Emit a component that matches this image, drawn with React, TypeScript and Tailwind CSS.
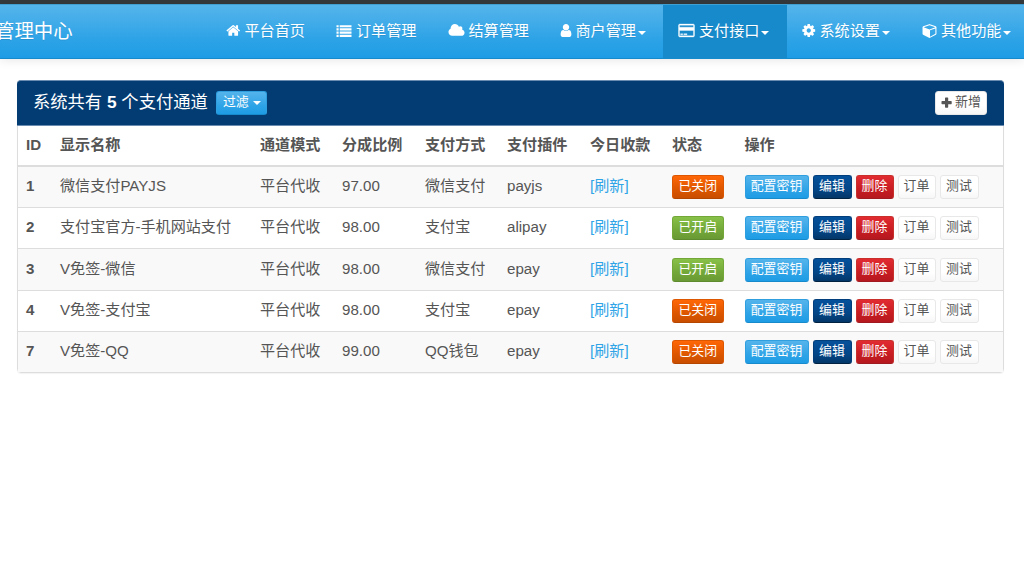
import type { ReactNode } from "react";
import clsx from "clsx";

interface NavItem {
  label: string;
  icon: ReactNode;
  width: string;
  hasMenu?: boolean;
  active?: boolean;
}

interface Channel {
  id: number;
  name: string;
  mode: string;
  rate: string;
  type: string;
  plugin: string;
  enabled: boolean;
  height: string;
}

const icon = (path: string, width = 1792, className = "w-[15px]") => (
  <svg viewBox={`0 0 ${width} 1792`} className={clsx("mb-px h-[15px] shrink-0 fill-current", className)}>
    <path fillRule="evenodd" d={path} />
  </svg>
);

const HomeIcon = icon(
  "M1408 992v480q0 26-19 45t-45 19h-384v-384h-256v384h-384q-26 0-45-19t-19-45v-480q0-1 .5-3t.5-3l575-474 575 474q1 2 1 6zm223-69l-62 74q-8 9-21 11h-3q-13 0-21-7l-692-577-692 577q-12 8-24 7-13-2-21-11l-62-74q-8-10-7-23.5t11-21.5l719-599q32-26 76-26t76 26l244 204v-195q0-14 9-23t23-9h192q14 0 23 9t9 23v408l219 182q10 8 11 21.5t-7 23.5z",
  1664,
  "w-[14.5px]"
);
const ListIcon = icon(
  "M0 256h256v256h-256zM0 640h256v256h-256zM0 1024h256v256h-256zM0 1408h256v256h-256zM384 256h1408v256h-1408zM384 640h1408v256h-1408zM384 1024h1408v256h-1408zM384 1408h1408v256h-1408z",
  1792,
  "w-[16px]"
);
const CloudIcon = icon(
  "M1920 1152q0 159-112.5 271.5t-271.5 112.5h-1088q-185 0-316.5-131.5t-131.5-316.5q0-132 71-241.5t187-163.5q-2-28-2-43 0-212 150-362t362-150q158 0 286.5 88t187.5 230q70-62 166-62 106 0 181 75t75 181q0 75-41 138 129 30 213 134.5t84 239.5z",
  1920,
  "w-[17px]"
);
const UserIcon = icon(
  "M1280 1399q0 109-62.5 187t-150.5 78h-854q-88 0-150.5-78t-62.5-187q0-85 8.5-160.5t31.5-152 58.5-131 94-89 134.5-34.5q131 128 313 128t313-128q76 0 134.5 34.5t94 89 58.5 131 31.5 152 8.5 160.5zm-256-887q0 159-112.5 271.5t-271.5 112.5-271.5-112.5-112.5-271.5 112.5-271.5 271.5-112.5 271.5 112.5 112.5 271.5z",
  1280,
  "w-[12px]"
);
const CardIcon = icon(
  "M1760 128q66 0 113 47t47 113v1216q0 66-47 113t-113 47h-1600q-66 0-113-47t-47-113v-1216q0-66 47-113t113-47h1600zM160 256q-13 0-22.5 9.5t-9.5 22.5v224h1664v-224q0-13-9.5-22.5t-22.5-9.5h-1600zM1760 1536q13 0 22.5-9.5t9.5-22.5v-608h-1664v608q0 13 9.5 22.5t22.5 9.5h1600zM256 1408v-128h256v128h-256zM640 1408v-128h384v128h-384z",
  1920,
  "w-[17px] stroke-current stroke-[40]"
);
const CogIcon = icon(
  "M1024 896q0-106-75-181t-181-75-181 75-75 181 75 181 181 75 181-75 75-181zm512-109v222q0 12-8 23t-20 13l-185 28q-19 54-39 91 35 50 107 138 10 12 10 25t-9 23q-27 37-99 108t-94 71q-12 0-26-9l-138-108q-44 23-91 38-16 136-29 186-7 28-36 28h-222q-14 0-24.5-8.5t-11.5-21.5l-28-184q-49-16-90-37l-141 107q-10 9-25 9-14 0-25-11-126-114-165-168-7-10-7-23 0-12 8-23 15-21 51-66.5t54-70.5q-27-50-41-99l-183-27q-13-2-21-12.5t-8-23.5v-222q0-12 8-23t19-13l186-28q14-46 39-92-40-57-107-138-10-12-10-24 0-10 9-23 26-36 98.5-107.5t94.5-71.5q13 0 26 10l138 107q44-23 91-38 16-136 29-186 7-28 36-28h222q14 0 24.5 8.5t11.5 21.5l28 184q49 16 90 37l142-107q9-9 24-9 13 0 25 10 129 119 165 170 7 8 7 22 0 12-8 23-15 21-51 66.5t-54 70.5q26 50 41 98l183 28q13 2 21 12.5t8 23.5z",
  1536,
  "w-[13.5px]"
);
const CubeIcon = icon(
  "M896 1629l640-349v-636l-640 233v752zm-64-865l698-254-698-254-698 254 698 254zm832-252v768q0 35-18 65t-49 47l-704 384q-28 16-61 16t-61-16l-704-384q-31-17-49-47t-18-65v-768q0-40 23-73t61-47l704-256q22-8 44-8t44 8l704 256q38 14 61 47t23 73z",
  1664,
  "w-[15px]"
);
const PlusIcon = (
  <svg viewBox="0 0 11 11" className="size-[11px] shrink-0 fill-current">
    <path d="M4.6 .5h2q.6 0 .6 .6v2.9h2.9q.6 0 .6 .6v2q0 .6-.6 .6h-2.9v2.9q0 .6-.6 .6h-2q-.6 0-.6-.6v-2.9h-2.9q-.6 0-.6-.6v-2q0-.6 .6-.6h2.9v-2.9q0-.6 .6-.6z" />
  </svg>
);

const navItems: NavItem[] = [
  { label: "平台首页", icon: HomeIcon, width: "w-[110px]" },
  { label: "订单管理", icon: ListIcon, width: "w-[111.5px]" },
  { label: "结算管理", icon: CloudIcon, width: "w-[112px]" },
  { label: "商户管理", icon: UserIcon, width: "w-[118.5px]", hasMenu: true },
  { label: "支付接口", icon: CardIcon, width: "w-[124px]", hasMenu: true, active: true },
  { label: "系统设置", icon: CogIcon, width: "w-[120px]", hasMenu: true },
  { label: "其他功能", icon: CubeIcon, width: "w-[117px]", hasMenu: true },
];

const columns = [
  { label: "ID", width: "w-[34px]" },
  { label: "显示名称", width: "w-[200px]" },
  { label: "通道模式", width: "w-[82px]" },
  { label: "分成比例", width: "w-[83px]" },
  { label: "支付方式", width: "w-[82px]" },
  { label: "支付插件", width: "w-[83px]" },
  { label: "今日收款", width: "w-[82px]" },
  { label: "状态", width: "w-[72.5px]" },
  { label: "操作", width: "w-auto" },
];

const channels: Channel[] = [
  { id: 1, name: "微信支付PAYJS", mode: "平台代收", rate: "97.00", type: "微信支付", plugin: "payjs", enabled: false, height: "h-[40px]" },
  { id: 2, name: "支付宝官方-手机网站支付", mode: "平台代收", rate: "98.00", type: "支付宝", plugin: "alipay", enabled: true, height: "h-[41px]" },
  { id: 3, name: "V免签-微信", mode: "平台代收", rate: "98.00", type: "微信支付", plugin: "epay", enabled: true, height: "h-[42px]" },
  { id: 4, name: "V免签-支付宝", mode: "平台代收", rate: "98.00", type: "支付宝", plugin: "epay", enabled: false, height: "h-[41px]" },
  { id: 7, name: "V免签-QQ", mode: "平台代收", rate: "99.00", type: "QQ钱包", plugin: "epay", enabled: false, height: "h-[41px]" },
];

const variants = {
  info: "border-[#2f9fe0] border-b-[#178acc] bg-linear-to-b from-[#54b4eb] via-[#2fa4e7] via-60% to-[#1d9ce5] text-white",
  primary: "border-[#033e7c] border-b-[#022241] bg-linear-to-b from-[#04519b] via-[#044687] via-60% to-[#033769] text-white",
  danger: "border-[#c9302c] border-b-[#a01a1f] bg-linear-to-b from-[#e12b31] via-[#c71c22] via-60% to-[#b5191f] text-white",
  warning: "border-[#dd5600] border-b-[#b44600] bg-linear-to-b from-[#ff6707] via-[#dd5600] via-60% to-[#c94e00] text-white",
  success: "border-[#73a839] border-b-[#5f8b2f] bg-linear-to-b from-[#88c149] via-[#73a839] via-60% to-[#699934] text-white",
  plain: "border-[#e8e8e8] bg-linear-to-b from-white via-white via-60% to-[#f7f7f7] text-[#555]",
};

function Caret({ className }: { className?: string }) {
  return <span className={clsx("size-0 shrink-0 border-x-4 border-t-4 border-x-transparent border-t-current", className)} />;
}

function Button({ variant, width, children }: { variant: keyof typeof variants; width: string; children: ReactNode }) {
  return (
    <button
      className={clsx(
        "flex h-[24px] shrink-0 items-center justify-center rounded-[3px] border pb-px text-[12.9px] leading-none whitespace-nowrap",
        variants[variant],
        width
      )}
    >
      {children}
    </button>
  );
}

function Navbar() {
  return (
    <nav className="flex h-[55px] border-t border-b border-t-[#3f9fd2] border-b-[#178acc] bg-linear-to-b from-[#54b4eb] via-[#2fa4e7] via-60% to-[#1d9ce5] text-white shadow-[0_1px_10px_rgba(0,0,0,0.1)] [text-shadow:0_1px_0_rgba(0,0,0,0.1)]">
      <div className="w-[211px] shrink-0 pt-[12px] text-[19.4px] leading-[28px] whitespace-nowrap">
        <span className="-ml-[5px]">管理中心</span>
      </div>
      {navItems.map((item) => (
        <a
          key={item.label}
          className={clsx(
            "flex shrink-0 items-center pb-px pl-[15px] text-[15.1px] leading-[20px] whitespace-nowrap",
            item.width,
            item.active && "bg-[#178acc]"
          )}
        >
          {item.icon}
          <span className="ml-1">{item.label}</span>
          {item.hasMenu && <Caret className="mt-[3px] ml-0.5" />}
        </a>
      ))}
    </nav>
  );
}

function ChannelRow({ channel, index }: { channel: Channel; index: number }) {
  return (
    <tr
      className={clsx(
        channel.height,
        index % 2 === 0 && "bg-[#f9f9f9]",
        index > 0 && "[&>td]:border-t [&>td]:border-[#ddd]"
      )}
    >
      <td className="pb-0.5 pl-2 font-bold">{channel.id}</td>
      <td className="pb-0.5 pl-2">{channel.name}</td>
      <td className="pb-0.5 pl-2">{channel.mode}</td>
      <td className="pb-0.5 pl-2">{channel.rate}</td>
      <td className="pb-0.5 pl-2">{channel.type}</td>
      <td className="pb-0.5 pl-2">{channel.plugin}</td>
      <td className="pb-0.5 pl-2 text-[#2fa4e7]">[刷新]</td>
      <td className="pl-2">
        <Button variant={channel.enabled ? "success" : "warning"} width="w-[51.5px]">
          {channel.enabled ? "已开启" : "已关闭"}
        </Button>
      </td>
      <td className="pl-2">
        <div className="flex gap-1">
          <Button variant="info" width="w-[64px]">配置密钥</Button>
          <Button variant="primary" width="w-[39px]">编辑</Button>
          <Button variant="danger" width="w-[38px]">删除</Button>
          <Button variant="plain" width="w-[38px]">订单</Button>
          <Button variant="plain" width="w-[39px]">测试</Button>
        </div>
      </td>
    </tr>
  );
}

export default function App() {
  return (
    <div className="h-[576px] w-[1024px] overflow-hidden bg-white font-['Liberation_Sans','Noto_Sans_CJK_SC',sans-serif] text-[#555]">
      <div className="h-[4px] bg-[#35393c]" />
      <Navbar />
      <section className="mt-[21px] ml-[17px] w-[987px] rounded-[4px] border border-[#ddd] shadow-[0_1px_1px_rgba(0,0,0,0.05)]">
        <header className="-mx-px -mt-px flex h-[46px] items-center rounded-t-[4px] border-t border-b border-t-[#6a8cb0] border-b-[#6a8cb0] bg-[#033c73] pr-[17px] pl-[16px] text-white">
          <h3 className="pb-0.5 text-[17.3px] leading-[20px] whitespace-nowrap">
            系统共有 <b>5</b> 个支付通道
          </h3>
          <div className="ml-[8.5px]">
            <Button variant="info" width="w-[51px]">
              过滤
              <Caret className="mt-px ml-1" />
            </Button>
          </div>
          <div className="ml-auto">
            <Button variant="plain" width="w-[52px]">
              {PlusIcon}
              <span className="ml-[3px]">新增</span>
            </Button>
          </div>
        </header>
        <table className="w-full table-fixed border-separate border-spacing-0 text-[15.1px] leading-[20px] whitespace-nowrap">
          <thead>
            <tr className="h-[41px] text-left">
              {columns.map((column) => (
                <th key={column.label} className={clsx("border-b-2 border-[#ddd] pb-px pl-2 font-bold", column.width)}>
                  {column.label}
                </th>
              ))}
            </tr>
          </thead>
          <tbody>
            {channels.map((channel, index) => (
              <ChannelRow key={channel.id} channel={channel} index={index} />
            ))}
          </tbody>
        </table>
      </section>
    </div>
  );
}
